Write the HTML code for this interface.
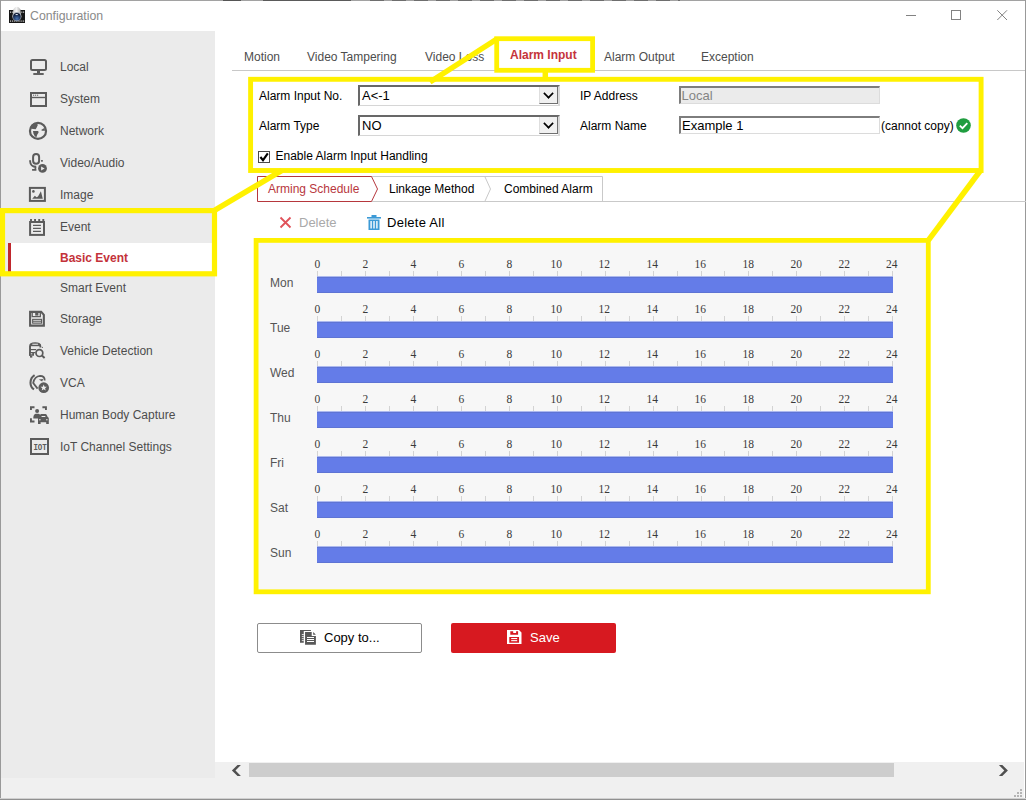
<!DOCTYPE html>
<html lang="en">
<head>
<meta charset="utf-8">
<title>Configuration</title>
<style>
*{box-sizing:border-box;margin:0;padding:0}
html,body{width:1026px;height:800px;overflow:hidden;background:#fff}
body{font-family:"Liberation Sans",sans-serif;font-size:12px;color:#4c4c4c;position:relative}
.abs{position:absolute}
.t{position:absolute;white-space:nowrap;line-height:14px}
#win{position:absolute;left:0;top:0;width:1026px;height:800px;background:#fff;overflow:hidden}
#title{position:absolute;left:30px;top:8px;font-size:12.3px;color:#8a8a8a;line-height:16px}
#side{position:absolute;left:1px;top:31px;width:214px;height:747px;background:#ebebeb}
#bottom{position:absolute;left:1px;top:778px;width:1023px;height:20px;background:#f0f0f0}
.nav{position:absolute;left:60px;font-size:12px;color:#4d4d4d;line-height:14px;white-space:nowrap}
.ico{position:absolute;left:28px}
.toptab{position:absolute;top:50px;font-size:12px;color:#4d4d4d;line-height:14px;white-space:nowrap}
.lbl{position:absolute;font-size:12px;color:#000;line-height:14px;white-space:nowrap}
.sel{position:absolute;height:21px;width:202px;background:#fff;border:1px solid #d6d6d6;border-top:2px solid #686868;border-left:2px solid #686868;border-right:2px solid #dadada;font-size:13px;color:#000;line-height:16px;padding-left:2px;padding-top:1px}
.hour{position:absolute;font-family:"Liberation Serif","Noto Serif CJK SC",serif;font-size:11.5px;color:#3a3a3a;line-height:12px;width:20px;text-align:center}
.bar{position:absolute;left:317px;width:576px;height:17px;background:#647ce8;background-clip:padding-box;border-top:1px solid rgba(100,124,232,.5);box-shadow:inset 0 1px 0 #5e74d4, inset 0 -1px 0 #5e74d4}
.day{position:absolute;left:270px;font-size:12px;color:#555;line-height:14px}

.inp{position:absolute;width:201px;border:1px solid #dcdcdc;border-top:2px solid #7d7d7d;border-left:2px solid #7d7d7d;font-size:13px;line-height:15px;padding-left:1px;white-space:nowrap}
.dd{position:absolute;right:0;top:0;width:19px;height:17px;background:#f0f0f0;border-left:1px solid #dedede;border-right:1px solid #707070;border-bottom:1px solid #707070}
.dd:after{content:"";position:absolute;left:4px;top:1.5px;width:7px;height:7px;border-right:2px solid #000;border-bottom:2px solid #000;transform:rotate(45deg) scale(.82)}
.ticks{position:absolute;left:317px;width:577px;height:5px;background:repeating-linear-gradient(to right,#d3d3d3 0,#d3d3d3 1px,transparent 1px,transparent 23.97px)}
</style>
</head>
<body>
<div id="win">
  <div id="title">Configuration</div>
  <div id="side"></div>
  <div id="bottom"></div>
<div class="abs" style="left:0;top:0;width:1026px;height:1px;background:#a2a2a2"></div><div class="abs" style="left:223px;top:0;width:18px;height:1px;background:#555"></div><div class="abs" style="left:263px;top:0;width:88px;height:1px;background:#5a5a5a"></div><div class="abs" style="left:370px;top:0;width:310px;height:1px;background:repeating-linear-gradient(to right,#6e6e6e 0,#6e6e6e 14px,#a2a2a2 14px,#a2a2a2 22px)"></div>
<div class="abs" style="left:0;top:0;width:1px;height:800px;background:#999"></div>
<div class="abs" style="left:1025px;top:0;width:1px;height:800px;background:#999"></div>
<div class="abs" style="left:0;top:798px;width:1026px;height:1px;background:#d0d0d0"></div><div class="abs" style="left:0;top:799px;width:1026px;height:1px;background:#909090"></div>
<svg class="abs" style="left:8px;top:5px" width="18" height="20" viewBox="0 0 18 20">
<defs><linearGradient id="dg" x1="0" y1="0" x2="1" y2="0"><stop offset="0" stop-color="#c9c9c9"/><stop offset="0.45" stop-color="#f4f4f4"/><stop offset="1" stop-color="#a9a9a9"/></linearGradient>
<radialGradient id="lg" cx="0.5" cy="0.75" r="0.6"><stop offset="0" stop-color="#4a74b0"/><stop offset="0.6" stop-color="#24406f"/><stop offset="1" stop-color="#101c36"/></radialGradient></defs>
<rect x="1" y="5" width="16" height="13" fill="#161616"/>
<g fill="#bdbdbd"><rect x="2" y="6.4" width="0.9" height="1.6"/><rect x="3.8" y="6.4" width="0.9" height="1.6"/><rect x="13.4" y="6.4" width="0.9" height="1.6"/><rect x="15.2" y="6.4" width="0.9" height="1.6"/>
<rect x="2" y="15.3" width="0.9" height="1.6"/><rect x="3.9" y="15.3" width="0.9" height="1.6"/><rect x="5.8" y="15.3" width="0.9" height="1.6"/><rect x="7.7" y="15.3" width="0.9" height="1.6"/><rect x="9.6" y="15.3" width="0.9" height="1.6"/><rect x="11.5" y="15.3" width="0.9" height="1.6"/><rect x="13.4" y="15.3" width="0.9" height="1.6"/><rect x="15.2" y="15.3" width="0.9" height="1.6"/></g>
<path d="M4.6 11.5 L5.4 4.2 Q8.9 -0.5 12.4 4.2 L13.2 11.5 Z" fill="url(#dg)"/>
<circle cx="8.9" cy="11.6" r="4.6" fill="#aab0ba"/>
<circle cx="8.9" cy="11.8" r="3.8" fill="url(#lg)"/>
<ellipse cx="8.7" cy="9.5" rx="1.3" ry="0.6" fill="#e8eef6"/>
</svg>
<svg class="abs" style="left:900px;top:6px" width="120" height="20" viewBox="0 0 120 20" fill="none" stroke="#828282" stroke-width="1">
<path d="M6 9.5 H16"/>
<rect x="51.5" y="4.5" width="9" height="9"/>
<path d="M97.3 4.3 L107 14 M107 4.3 L97.3 14"/>
</svg>
<div class="abs" style="left:8px;top:243px;width:207px;height:30px;background:#fff"></div>
<div class="abs" style="left:8px;top:243px;width:3px;height:30px;background:#c0272d"></div>
<svg class="abs" style="left:29px;top:58px" width="20" height="18" viewBox="0 0 20 18" fill="none" stroke="#5b5b5b">
<rect x="2" y="2" width="15" height="10" rx="1.5" stroke-width="2"/>
<path d="M9.5 12 V15.5" stroke-width="3"/><path d="M4.3 16 H14.7" stroke-width="1.9"/></svg>
<svg class="abs" style="left:29px;top:91px" width="20" height="18" viewBox="0 0 20 18" fill="none" stroke="#5b5b5b">
<rect x="2" y="2" width="15" height="13" stroke-width="2"/><path d="M2 6.5 H17" stroke-width="1.4"/>
<path d="M4 4.2 H5.2 M6 4.2 H7.2 M8 4.2 H9.2" stroke-width="1"/></svg>
<svg class="abs" style="left:28px;top:121px" width="20" height="20" viewBox="0 0 20 20">
<circle cx="10" cy="9.9" r="8.05" fill="none" stroke="#5b5b5b" stroke-width="2.2"/>
<path d="M2.4 7.6 L3 4.6 L5.6 2.4 L8.5 2 L9.9 4 L8.8 6.2 L7.7 8.3 L5 8 Z" fill="#5b5b5b"/>
<path d="M5 10 L10.2 10 L10.6 11.5 L9.2 13.8 L8.5 16 L6.9 15.4 L5.4 12.6 Z" fill="#5b5b5b"/>
<path d="M13.2 9.1 L16.6 6.8 L17 9.7 L14 9.8 Z" fill="#5b5b5b"/>
</svg>
<svg class="abs" style="left:28px;top:152px" width="22" height="24" viewBox="0 0 22 24" fill="none" stroke="#5b5b5b">
<rect x="5.1" y="1.9" width="6" height="9.8" rx="3" stroke-width="2"/>
<path d="M2.1 8.2 V9 C2.1 12.5 4.6 14.8 8.2 14.8" stroke-width="1.9"/>
<path d="M7.4 14.8 V18 M4.1 17.9 H8.4" stroke-width="1.7"/>
<circle cx="14.5" cy="16.4" r="4.4" fill="#5b5b5b" stroke="none"/>
<path d="M13.1 14.4 L16.6 16.4 L13.1 18.5 Z" fill="#ebebeb" stroke="none"/>
<rect x="13.1" y="8" width="1.7" height="1.7" fill="#5b5b5b" stroke="none"/>
</svg>
<svg class="abs" style="left:28px;top:186px" width="20" height="17" viewBox="0 0 20 17">
<rect x="1.9" y="1.9" width="15" height="13" fill="none" stroke="#5b5b5b" stroke-width="2"/>
<path d="M4.2 12.7 L6.9 9.7 L8.5 11.2 L10 10.6 L12.9 5.2 L14.8 12.7 Z" fill="#5b5b5b"/><circle cx="5.4" cy="5.4" r="1.3" fill="#5b5b5b"/></svg>
<svg class="abs" style="left:28px;top:218px" width="20" height="20" viewBox="0 0 20 20" fill="none" stroke="#5b5b5b">
<rect x="2.1" y="4" width="13.9" height="12.9" stroke-width="2"/>
<path d="M3 0.9 V3.4 M7.05 0.9 V3.4 M11.2 0.9 V3.4 M15.3 0.9 V3.4" stroke-width="1.9"/>
<path d="M5 7.4 H12.9 M5 10.4 H12.9 M5 13.4 H12.9" stroke-width="1.2"/></svg>
<svg class="abs" style="left:28px;top:310px" width="20" height="18" viewBox="0 0 20 18">
<path d="M2.1 1.9 H13.2 L15.85 4.8 V15.65 H2.1 Z" fill="none" stroke="#5b5b5b" stroke-width="2.1"/>
<path d="M4.2 2 V6.7 H12.3 V2" fill="none" stroke="#5b5b5b" stroke-width="1.3"/><rect x="7.2" y="2.4" width="3.2" height="3.2" fill="#5b5b5b"/>
<rect x="4.1" y="8.8" width="10" height="4.9" fill="#5b5b5b"/><path d="M5.2 10.4 H13 M5.2 12.2 H13" stroke="#ebebeb" stroke-width="0.8"/></svg>
<svg class="abs" style="left:28px;top:342px" width="24" height="20" viewBox="0 0 24 20" fill="none" stroke="#5b5b5b">
<path d="M2 13.8 V4.4 C2 2 4.2 1.2 7.2 1.2 C10.2 1.2 12.4 2 12.4 4.4 V5.6" stroke-width="1.9"/>
<path d="M2 3.4 H12.4" stroke-width="1.6"/><path d="M4.4 2.2 H10" stroke="#ebebeb" stroke-width="0.9"/>
<path d="M2 7.6 H8.2" stroke-width="1.2"/>
<path d="M1.1 10 H7.4 V11.2 H6 V13.8 H1.1 Z" fill="#5b5b5b" stroke="none"/><rect x="2.8" y="11.3" width="1.5" height="1" fill="#ebebeb" stroke="none"/>
<rect x="2" y="13.8" width="2.3" height="1.8" fill="#5b5b5b" stroke="none"/>
<circle cx="11.4" cy="11.1" r="3.4" stroke-width="1.7"/><path d="M13.9 13.6 L16.6 16.1" stroke-width="2"/>
<rect x="13.9" y="4.9" width="1" height="1" fill="#5b5b5b" stroke="none"/></svg>
<svg class="abs" style="left:28px;top:373px" width="24" height="24" viewBox="0 0 24 24" fill="none" stroke="#5b5b5b">
<path d="M6.6 2.2 C3.8 4 2.5 6.8 2.5 9.8 C2.5 12.8 3.6 15 6 16.4" stroke-width="2.1"/>
<path d="M16.7 7.4 C16.7 4.6 14.8 2.9 12 2.9 C8.8 3 5.9 6 5.2 10 L9.6 15.6" stroke-width="1.8" stroke-linejoin="round"/>
<path d="M10.8 6.5 L15.2 6.1 L14.2 8.4 Z" fill="#5b5b5b" stroke="none"/>
<circle cx="15.7" cy="14.7" r="5.35" fill="#5b5b5b" stroke="none"/>
<path d="M15.7 11.6 L16.6 13.7 L18.9 13.8 L17.1 15.3 L17.7 17.6 L15.7 16.3 L13.7 17.6 L14.3 15.3 L12.5 13.8 L14.8 13.7 Z" fill="#ebebeb" stroke="none"/></svg>
<svg class="abs" style="left:29px;top:405px" width="22" height="20" viewBox="0 0 22 20" fill="none" stroke="#5b5b5b">
<path d="M1.95 5 V2.2 H5.5 M13.4 2.2 H16.95 V5 M1.95 13.25 V16.45 H5.5" stroke-width="1.9"/>
<circle cx="8.1" cy="5.9" r="2" fill="#5b5b5b" stroke="none"/>
<path d="M4.3 12.4 C4.5 10 5.6 8.8 7 8.8 H9.4 C10.6 8.8 11.3 9.8 11.5 11 L9.5 13.4 H4.3 Z" fill="#5b5b5b" stroke="none"/>
<path d="M9 18.9 V13.6 C9 12.6 9.5 12.1 10.1 11.9 L10.9 10.2 C11.2 9.5 11.7 9.1 12.4 9.1 H16.4 C17.1 9.1 17.6 9.5 17.9 10.2 L18.7 11.9 C19.3 12.1 19.8 12.6 19.8 13.6 V18.9 H17.2 V17.2 H11.6 V18.9 Z M12.4 12 H16.5 L16.2 10.9 H12.7 Z" fill="#5b5b5b" stroke="none" fill-rule="evenodd"/>
<circle cx="10.9" cy="14.8" r="0.75" fill="#ebebeb" stroke="none"/><circle cx="17.9" cy="14.8" r="0.75" fill="#ebebeb" stroke="none"/></svg>
<svg class="abs" style="left:29px;top:437px" width="22" height="20" viewBox="0 0 22 20">
<rect x="2" y="2" width="17" height="15" fill="none" stroke="#5b5b5b" stroke-width="2"/>
<text x="4.4" y="12.5" font-family="Liberation Mono, monospace" font-weight="bold" font-size="9.6" fill="#5b5b5b" textLength="13.4" lengthAdjust="spacingAndGlyphs">IOT</text></svg>
<div class="nav" style="top:60px">Local</div>
<div class="nav" style="top:92px">System</div>
<div class="nav" style="top:124px">Network</div>
<div class="nav" style="top:156px">Video/Audio</div>
<div class="nav" style="top:188px">Image</div>
<div class="nav" style="top:220px">Event</div>
<div class="nav" style="top:281px">Smart Event</div>
<div class="nav" style="top:312px">Storage</div>
<div class="nav" style="top:344px">Vehicle Detection</div>
<div class="nav" style="top:376px">VCA</div>
<div class="nav" style="top:408px">Human Body Capture</div>
<div class="nav" style="top:440px">IoT Channel Settings</div>
<div class="nav" style="top:251px;color:#c4323a;font-weight:bold">Basic Event</div>
<div class="toptab" style="left:244px">Motion</div>
<div class="toptab" style="left:307px">Video Tampering</div>
<div class="toptab" style="left:425px">Video Loss</div>
<div class="toptab" style="left:604px">Alarm Output</div>
<div class="toptab" style="left:701px">Exception</div>
<div class="toptab" style="left:510px;top:48px;color:#c5333b;font-weight:bold">Alarm Input</div>
<div class="abs" style="left:232px;top:70px;width:793px;height:1px;background:#c8c8c8"></div>
<div class="lbl" style="left:259px;top:89px">Alarm Input No.</div>
<div class="lbl" style="left:259px;top:119px">Alarm Type</div>
<div class="lbl" style="left:580px;top:89px">IP Address</div>
<div class="lbl" style="left:580px;top:119px">Alarm Name</div>
<div class="sel" style="left:358px;top:85px">A&lt;-1<span class="dd"></span></div>
<div class="sel" style="left:358px;top:115px">NO<span class="dd"></span></div>
<div class="inp" style="left:679px;top:86px;height:18px;background:#ebebeb;color:#848484;padding-left:0.5px">Local</div>
<div class="inp" style="left:679px;top:116px;height:18px;background:#fff;color:#000">Example 1</div>
<div class="lbl" style="left:881px;top:119px">(cannot copy)</div>
<svg class="abs" style="left:956px;top:118px" width="15" height="15" viewBox="0 0 15 15"><circle cx="7.5" cy="7.5" r="7.3" fill="#1f9d3f"/><path d="M3.8 7.6 L6.5 10.2 L11.3 5.2" fill="none" stroke="#fff" stroke-width="1.8"/></svg>
<svg class="abs" style="left:258px;top:151px" width="12" height="12" viewBox="0 0 12 12"><rect x="0.5" y="0.5" width="11" height="11" fill="#fff" stroke="#4a4a4a"/><path d="M2.4 6 L5 9.2 L9.8 2.4" fill="none" stroke="#000" stroke-width="2.1"/></svg>
<div class="lbl" style="left:275.5px;top:149px">Enable Alarm Input Handling</div>
<svg class="abs" style="left:257px;top:176px" width="769" height="27" viewBox="0 0 769 27" fill="none">
<path d="M0.5 0.5 H345.5 V25.5 M114 25.5 H769" stroke="#c9c9c9"/>
<path d="M227.8 0.5 L233.5 13 L227.8 25.5" stroke="#c9c9c9"/>
<path d="M0.5 0.5 H114.5 L120.5 13 L114.5 25.5 H0.5 Z" stroke="#b6373d" fill="#fff"/>
</svg>
<div class="lbl" style="left:268px;top:182px;color:#b8373d">Arming Schedule</div>
<div class="lbl" style="left:389px;top:182px">Linkage Method</div>
<div class="lbl" style="left:504px;top:182px">Combined Alarm</div>
<svg class="abs" style="left:279px;top:216px" width="13" height="13" viewBox="0 0 13 13"><path d="M1.5 1.5 L11.5 11.5 M11.5 1.5 L1.5 11.5" stroke="#e0525a" stroke-width="1.8" fill="none"/></svg>
<div class="lbl" style="left:299px;top:215px;font-size:13px;line-height:15px;color:#a9a9a9">Delete</div>
<svg class="abs" style="left:367px;top:215px" width="14" height="15" viewBox="0 0 14 15" fill="#3c9ad6"><rect x="0" y="2" width="14" height="1.6"/><rect x="4.5" y="0" width="5" height="2.4"/><path d="M1.5 4.5 H12.5 V15 H1.5 Z M3.4 6 V13.5 H4.8 V6 Z M6.3 6 V13.5 H7.7 V6 Z M9.2 6 V13.5 H10.6 V6 Z" fill-rule="evenodd"/></svg>
<div class="lbl" style="left:387px;top:215px;font-size:13px;line-height:15px;letter-spacing:0.27px">Delete All</div>
<div class="abs" style="left:256px;top:241px;width:673px;height:351px;background:#f7f7f7"></div>
<div class="day" style="top:276px">Mon</div>
<div class="bar" style="top:276px"></div>
<div class="ticks" style="top:271px"></div>
<div class="hour" style="left:307.3px;top:258px">0</div>
<div class="hour" style="left:355.3px;top:258px">2</div>
<div class="hour" style="left:403.3px;top:258px">4</div>
<div class="hour" style="left:451.3px;top:258px">6</div>
<div class="hour" style="left:499.3px;top:258px">8</div>
<div class="hour" style="left:546.3px;top:258px">10</div>
<div class="hour" style="left:594.3px;top:258px">12</div>
<div class="hour" style="left:642.3px;top:258px">14</div>
<div class="hour" style="left:690.3px;top:258px">16</div>
<div class="hour" style="left:738.3px;top:258px">18</div>
<div class="hour" style="left:786.3px;top:258px">20</div>
<div class="hour" style="left:834.3px;top:258px">22</div>
<div class="hour" style="left:881.7px;top:258px">24</div>
<div class="day" style="top:321px">Tue</div>
<div class="bar" style="top:321px"></div>
<div class="ticks" style="top:316px"></div>
<div class="hour" style="left:307.3px;top:303px">0</div>
<div class="hour" style="left:355.3px;top:303px">2</div>
<div class="hour" style="left:403.3px;top:303px">4</div>
<div class="hour" style="left:451.3px;top:303px">6</div>
<div class="hour" style="left:499.3px;top:303px">8</div>
<div class="hour" style="left:546.3px;top:303px">10</div>
<div class="hour" style="left:594.3px;top:303px">12</div>
<div class="hour" style="left:642.3px;top:303px">14</div>
<div class="hour" style="left:690.3px;top:303px">16</div>
<div class="hour" style="left:738.3px;top:303px">18</div>
<div class="hour" style="left:786.3px;top:303px">20</div>
<div class="hour" style="left:834.3px;top:303px">22</div>
<div class="hour" style="left:881.7px;top:303px">24</div>
<div class="day" style="top:366px">Wed</div>
<div class="bar" style="top:366px"></div>
<div class="ticks" style="top:361px"></div>
<div class="hour" style="left:307.3px;top:348px">0</div>
<div class="hour" style="left:355.3px;top:348px">2</div>
<div class="hour" style="left:403.3px;top:348px">4</div>
<div class="hour" style="left:451.3px;top:348px">6</div>
<div class="hour" style="left:499.3px;top:348px">8</div>
<div class="hour" style="left:546.3px;top:348px">10</div>
<div class="hour" style="left:594.3px;top:348px">12</div>
<div class="hour" style="left:642.3px;top:348px">14</div>
<div class="hour" style="left:690.3px;top:348px">16</div>
<div class="hour" style="left:738.3px;top:348px">18</div>
<div class="hour" style="left:786.3px;top:348px">20</div>
<div class="hour" style="left:834.3px;top:348px">22</div>
<div class="hour" style="left:881.7px;top:348px">24</div>
<div class="day" style="top:411px">Thu</div>
<div class="bar" style="top:411px"></div>
<div class="ticks" style="top:406px"></div>
<div class="hour" style="left:307.3px;top:393px">0</div>
<div class="hour" style="left:355.3px;top:393px">2</div>
<div class="hour" style="left:403.3px;top:393px">4</div>
<div class="hour" style="left:451.3px;top:393px">6</div>
<div class="hour" style="left:499.3px;top:393px">8</div>
<div class="hour" style="left:546.3px;top:393px">10</div>
<div class="hour" style="left:594.3px;top:393px">12</div>
<div class="hour" style="left:642.3px;top:393px">14</div>
<div class="hour" style="left:690.3px;top:393px">16</div>
<div class="hour" style="left:738.3px;top:393px">18</div>
<div class="hour" style="left:786.3px;top:393px">20</div>
<div class="hour" style="left:834.3px;top:393px">22</div>
<div class="hour" style="left:881.7px;top:393px">24</div>
<div class="day" style="top:456px">Fri</div>
<div class="bar" style="top:456px"></div>
<div class="ticks" style="top:451px"></div>
<div class="hour" style="left:307.3px;top:438px">0</div>
<div class="hour" style="left:355.3px;top:438px">2</div>
<div class="hour" style="left:403.3px;top:438px">4</div>
<div class="hour" style="left:451.3px;top:438px">6</div>
<div class="hour" style="left:499.3px;top:438px">8</div>
<div class="hour" style="left:546.3px;top:438px">10</div>
<div class="hour" style="left:594.3px;top:438px">12</div>
<div class="hour" style="left:642.3px;top:438px">14</div>
<div class="hour" style="left:690.3px;top:438px">16</div>
<div class="hour" style="left:738.3px;top:438px">18</div>
<div class="hour" style="left:786.3px;top:438px">20</div>
<div class="hour" style="left:834.3px;top:438px">22</div>
<div class="hour" style="left:881.7px;top:438px">24</div>
<div class="day" style="top:501px">Sat</div>
<div class="bar" style="top:501px"></div>
<div class="ticks" style="top:496px"></div>
<div class="hour" style="left:307.3px;top:483px">0</div>
<div class="hour" style="left:355.3px;top:483px">2</div>
<div class="hour" style="left:403.3px;top:483px">4</div>
<div class="hour" style="left:451.3px;top:483px">6</div>
<div class="hour" style="left:499.3px;top:483px">8</div>
<div class="hour" style="left:546.3px;top:483px">10</div>
<div class="hour" style="left:594.3px;top:483px">12</div>
<div class="hour" style="left:642.3px;top:483px">14</div>
<div class="hour" style="left:690.3px;top:483px">16</div>
<div class="hour" style="left:738.3px;top:483px">18</div>
<div class="hour" style="left:786.3px;top:483px">20</div>
<div class="hour" style="left:834.3px;top:483px">22</div>
<div class="hour" style="left:881.7px;top:483px">24</div>
<div class="day" style="top:546px">Sun</div>
<div class="bar" style="top:546px"></div>
<div class="ticks" style="top:541px"></div>
<div class="hour" style="left:307.3px;top:528px">0</div>
<div class="hour" style="left:355.3px;top:528px">2</div>
<div class="hour" style="left:403.3px;top:528px">4</div>
<div class="hour" style="left:451.3px;top:528px">6</div>
<div class="hour" style="left:499.3px;top:528px">8</div>
<div class="hour" style="left:546.3px;top:528px">10</div>
<div class="hour" style="left:594.3px;top:528px">12</div>
<div class="hour" style="left:642.3px;top:528px">14</div>
<div class="hour" style="left:690.3px;top:528px">16</div>
<div class="hour" style="left:738.3px;top:528px">18</div>
<div class="hour" style="left:786.3px;top:528px">20</div>
<div class="hour" style="left:834.3px;top:528px">22</div>
<div class="hour" style="left:881.7px;top:528px">24</div>
<div class="abs" style="left:257px;top:623px;width:165px;height:30px;border:1px solid #8c8c8c;border-radius:2px;background:#fff"></div>
<svg class="abs" style="left:300px;top:630px" width="17" height="15" viewBox="0 0 17 15" fill="#585858">
<path d="M0 0 H10.9 V1 H3.75 V12.85 H0 Z"/>
<path d="M5.05 2.1 H11.7 V6 H15.9 V14.8 H5.05 Z"/><path d="M13.2 2.1 L15.9 4.7 H13.2 Z"/>
<g fill="#fff"><rect x="1.8" y="4.2" width="2" height="0.85"/><rect x="1.8" y="6.25" width="2" height="0.8"/><rect x="1.8" y="8.3" width="2" height="0.8"/><rect x="1.8" y="10.25" width="2" height="0.8"/>
<rect x="7" y="7" width="7" height="1"/><rect x="7" y="9" width="7" height="1"/><rect x="7" y="11" width="7" height="1"/></g></svg>
<div class="lbl" style="left:324px;top:630px;font-size:13px;line-height:15px">Copy to...</div>
<div class="abs" style="left:451px;top:623px;width:165px;height:30px;border-radius:2px;background:#d71920"></div>
<svg class="abs" style="left:506.8px;top:630px" width="15" height="14" viewBox="0 0 15 14">
<path d="M0 0 H12 L14.5 2.6 V14 H0 Z M3.3 1.3 V4.7 H11.1 V1.3 H9.1 V2.9 H6.2 V1.3 Z M2.3 7 V12.85 H12.05 V7 Z" fill="#fff" fill-rule="evenodd"/>
<rect x="4.2" y="8" width="6" height="1.1" fill="#fff"/><rect x="4.2" y="10.1" width="6" height="1.1" fill="#fff"/></svg>
<div class="lbl" style="left:530px;top:630px;font-size:13px;line-height:15px;color:#fff">Save</div>
<div class="abs" style="left:215px;top:762px;width:809px;height:16px;background:#f0f0f0"></div>
<div class="abs" style="left:249px;top:763px;width:645px;height:14px;background:#cdcdcd"></div>
<svg class="abs" style="left:230px;top:764px" width="12" height="13" viewBox="0 0 12 13"><path d="M1.9 6.4 L7.5 1 H10.9 L5.5 6.4 L10.9 12 H7.5 Z" fill="#505050"/></svg>
<svg class="abs" style="left:997px;top:764px" width="12" height="13" viewBox="0 0 12 13"><path d="M10.9 6.4 L5.3 1 H1.9 L7.3 6.4 L1.9 12 H5.3 Z" fill="#505050"/></svg>
<svg class="abs" style="left:1013px;top:788px" width="10" height="10" viewBox="0 0 10 10" fill="#b4b4b4"><rect x="7" y="1" width="2" height="2"/><rect x="4" y="4" width="2" height="2"/><rect x="7" y="4" width="2" height="2"/><rect x="1" y="7" width="2" height="2"/><rect x="4" y="7" width="2" height="2"/><rect x="7" y="7" width="2" height="2"/></svg>
<svg class="abs" style="left:0;top:0" width="1026" height="800" viewBox="0 0 1026 800" fill="none" stroke="#fff100" stroke-width="4.8" stroke-linejoin="miter">
<rect x="496.7" y="38.7" width="95.9" height="31.6"/>
<rect x="250.6" y="79.3" width="730.5" height="91.2" stroke-width="4.9"/>
<rect x="2.5" y="210.6" width="212" height="63.2" stroke-width="5.2"/>
<rect x="256.1" y="240.4" width="672.2" height="351.4"/>
<g stroke-width="5.5">
<path d="M545.3 71 V78"/>
<path d="M496.5 39.3 L430 82"/>
<path d="M282 170.4 L214.5 210.3"/>
<path d="M980.5 170.5 L928.3 240.4"/>
</g>
</svg>
</div>
</body>
</html>
